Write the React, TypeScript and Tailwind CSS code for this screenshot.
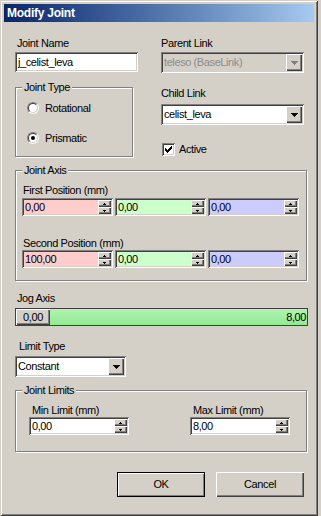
const sunken =
  "shadow-[inset_1px_1px_#808080,inset_-1px_-1px_#ffffff,inset_2px_2px_#404040,inset_-2px_-2px_#d4d0c8]";
const raised = "shadow-[inset_1px_1px_#ffffff,inset_-1px_-1px_#404040,inset_-2px_-2px_#808080]";

// pixel triangle, rows of odd width
function Tri({ rows, up, color = "#000" }: { rows: number; up?: boolean; color?: string }) {
  const w = rows * 2 - 1;
  return (
    <svg width={w} height={rows} viewBox={`0 0 ${w} ${rows}`} shapeRendering="crispEdges">
      {Array.from({ length: rows }).map((_, i) => {
        const rw = up ? i * 2 + 1 : w - i * 2;
        return <rect key={i} x={(w - rw) / 2} y={i} width={rw} height={1} fill={color} />;
      })}
    </svg>
  );
}

function SpinEdit({ value, className }: { value: string; className: string }) {
  return (
    <div className={`flex h-[18px] p-[2px] ${sunken} ${className}`}>
      <div className="flex-1 pl-[1px] leading-[14px]">{value}</div>
      <div className="flex w-[13px] flex-col">
        <div className={`flex flex-1 items-center justify-center bg-[#d4d0c8] ${raised}`}>
          <Tri rows={2} up />
        </div>
        <div className={`flex flex-1 items-center justify-center bg-[#d4d0c8] ${raised}`}>
          <Tri rows={2} />
        </div>
      </div>
    </div>
  );
}

function Combo({ value, className, disabled }: { value: string; className: string; disabled?: boolean }) {
  return (
    <div className={`flex h-[21px] p-[2px] ${sunken} ${className} ${disabled ? "bg-[#d4d0c8]" : "bg-white"}`}>
      <div className={`flex-1 pl-[1px] leading-[17px] ${disabled ? "text-[#8c8c8c]" : ""}`}>{value}</div>
      <div className={`flex w-[16px] items-center justify-center bg-[#d4d0c8] ${raised}`}>
        <Tri rows={4} color={disabled ? "#808080" : "#000"} />
      </div>
    </div>
  );
}

function Group({ label, className, children }: { label: string; className: string; children: React.ReactNode }) {
  return (
    <div className={`relative border border-[#808080] shadow-[inset_1px_1px_#ffffff,1px_1px_#ffffff] ${className}`}>
      <span className="absolute left-[6px] top-[-7px] bg-[#d4d0c8] px-[2px]">{label}</span>
      {children}
    </div>
  );
}

function Radio({ label, checked }: { label: string; checked?: boolean }) {
  return (
    <div className="flex h-[12px] items-center gap-[6px]">
      <div className="h-[12px] w-[12px] rounded-full border border-t-[#808080] border-l-[#808080] border-r-white border-b-white">
        <div className="flex h-full w-full items-center justify-center rounded-full border border-t-[#404040] border-l-[#404040] border-r-[#d4d0c8] border-b-[#d4d0c8] bg-white">
          {checked && <div className="h-[4px] w-[4px] rounded-full bg-black" />}
        </div>
      </div>
      <span>{label}</span>
    </div>
  );
}

function Button({ label, isDefault }: { label: string; isDefault?: boolean }) {
  return (
    <div
      className={`flex h-[25px] w-[88px] items-center justify-center bg-[#d4d0c8] ${
        isDefault ? "border border-black shadow-[inset_1px_1px_#ffffff,inset_-1px_-1px_#808080]" : raised
      }`}
    >
      {label}
    </div>
  );
}

export default function App() {
  return (
    <div className="h-[516px] w-[321px] bg-[#d4d0c8] font-['Liberation_Sans',Arial,sans-serif] text-[11px] leading-[13px] tracking-[-0.4px] text-black">
      <div className="flex h-[516px] w-[318px] flex-col p-[4px] shadow-[inset_1px_1px_#d4d0c8,inset_-1px_-1px_#404040,inset_2px_2px_#ffffff,inset_-2px_-2px_#808080]">
        {/* Title bar */}
        <div className="flex h-[18px] items-center bg-gradient-to-r from-[#0a246a] to-[#a6caf0] pl-[3px] text-[12px] font-bold tracking-[-0.25px] text-white">
          Modify Joint
        </div>

        <div className="flex flex-col pl-[11px]">
          {/* Top */}
          <div className="mt-[15px] flex gap-[23px]">
            <div className="flex w-[123px] flex-col">
              <div className="pl-[2px]">Joint Name</div>
              <div className={`mt-[2px] h-[20px] w-[123px] bg-white p-[2px] pl-[3px] leading-[16px] ${sunken}`}>
                j_celist_leva
              </div>
              <Group label="Joint Type" className="mt-[15px] h-[70px] w-[118px]">
                <div className="flex flex-col gap-[18px] pl-[11px] pt-[14px]">
                  <Radio label="Rotational" />
                  <Radio label="Prismatic" checked />
                </div>
              </Group>
            </div>
            <div className="flex w-[143px] flex-col">
              <div>Parent Link</div>
              <Combo value="teleso (BaseLink)" className="mt-[2px] w-[143px]" disabled />
              <div className="mt-[14px]">Child Link</div>
              <Combo value="celist_leva" className="mt-[4px] w-[143px]" />
              <div className="mt-[18px] flex h-[13px] items-center gap-[4px] pl-[1px]">
                <div className={`flex h-[13px] w-[13px] items-center justify-center bg-white ${sunken}`}>
                  <svg width="7" height="7" viewBox="0 0 7 7" shapeRendering="crispEdges">
                    {[2, 3, 4, 3, 2, 1, 0].map((y, x) => (
                      <rect key={x} x={x} y={y} width={1} height={3} fill="#000" />
                    ))}
                  </svg>
                </div>
                <span>Active</span>
              </div>
            </div>
          </div>

          {/* Joint Axis */}
          <Group label="Joint Axis" className="mt-[13px] h-[111px] w-[292px]">
            <div className="flex flex-col pl-[6px] pt-[13px]">
              <div className="pl-[1px]">First Position (mm)</div>
              <div className="mt-[1px] flex gap-[2px]">
                <SpinEdit value="0,00" className="w-[91px] bg-[#ffcccc]" />
                <SpinEdit value="0,00" className="w-[91px] bg-[#ccffcc]" />
                <SpinEdit value="0,00" className="w-[91px] bg-[#ccccff]" />
              </div>
              <div className="mt-[21px] pl-[1px]">Second Position (mm)</div>
              <div className="flex gap-[2px]">
                <SpinEdit value="100,00" className="w-[91px] bg-[#ffcccc]" />
                <SpinEdit value="0,00" className="w-[91px] bg-[#ccffcc]" />
                <SpinEdit value="0,00" className="w-[91px] bg-[#ccccff]" />
              </div>
            </div>
          </Group>

          {/* Jog Axis */}
          <div className="mt-[11px] pl-[2px]">Jog Axis</div>
          <div className="mt-[3px] flex h-[18px] w-[293px] border border-[#404040] bg-gradient-to-b from-[#b0f4b0] to-[#92e992]">
            <div className={`flex w-[34px] items-center justify-center bg-[#d4d0c8] ${raised}`}>0,00</div>
            <div className="flex flex-1 items-center justify-end pr-[1px]">8,00</div>
          </div>

          {/* Limit Type */}
          <div className="mt-[14px] pl-[4px]">Limit Type</div>
          <Combo value="Constant" className="mt-[3px] w-[111px]" />

          {/* Joint Limits */}
          <Group label="Joint Limits" className="mt-[13px] h-[62px] w-[292px]">
            <div className="flex gap-[61px] pl-[13px] pt-[13px]">
              <div className="flex w-[100px] flex-col">
                <div className="pl-[3px]">Min Limit (mm)</div>
                <SpinEdit value="0,00" className="w-[100px] bg-white" />
              </div>
              <div className="flex w-[100px] flex-col">
                <div className="pl-[3px]">Max Limit (mm)</div>
                <SpinEdit value="8,00" className="w-[100px] bg-white" />
              </div>
            </div>
          </Group>

          {/* Buttons */}
          <div className="mt-[20px] flex gap-[11px] pl-[102px]">
            <Button label="OK" isDefault />
            <Button label="Cancel" />
          </div>
        </div>
      </div>
    </div>
  );
}
